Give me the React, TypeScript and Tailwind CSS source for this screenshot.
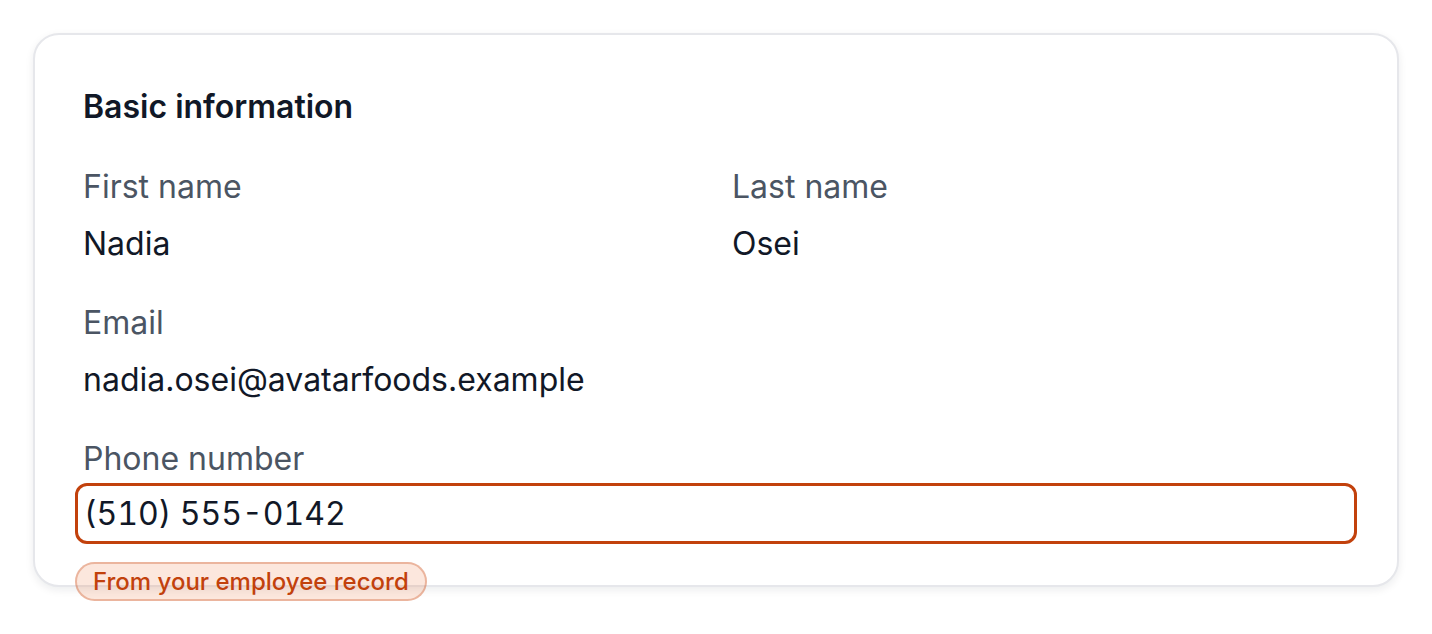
export default function App() {
  return (
    <div
      className="min-h-screen bg-white p-[33px]"
      style={{ fontFamily: 'Inter, "Liberation Sans", sans-serif' }}
    >
      <div className="relative h-[554px] rounded-[26px] border-2 border-[#e6e7eb] bg-white px-[40px] pt-[52px] shadow-[0_3px_8px_rgba(17,24,39,0.08)]">
        <h2 className="pl-[8px] text-[32px] font-semibold leading-[40px] text-[#111827]">
          Basic information
        </h2>

        <div className="mt-[40px] grid grid-cols-2 gap-x-[16px]">
          <div className="pl-[8px]">
            <div className="text-[32px] leading-[40px] text-[#4b5563]">First name</div>
            <div className="mt-[17px] text-[32px] leading-[40px] text-[#111827]">Nadia</div>
          </div>
          <div className="pl-[8px]">
            <div className="text-[32px] leading-[40px] text-[#4b5563]">Last name</div>
            <div className="mt-[17px] text-[32px] leading-[40px] text-[#111827]">Osei</div>
          </div>
        </div>

        <div className="mt-[39px] pl-[8px]">
          <div className="text-[32px] leading-[40px] text-[#4b5563]">Email</div>
          <div className="mt-[17px] text-[32px] leading-[40px] text-[#111827]">
            nadia.osei@avatarfoods.example
          </div>
        </div>

        <div className="mt-[39px]">
          <label className="block pl-[8px] text-[32px] leading-[40px] text-[#4b5563]">
            Phone number
          </label>
          <div className="mt-[4px] flex h-[61px] items-center rounded-[12px] border-[3px] border-[#c2410c] bg-white px-[6px]">
            <span className="text-[32px] leading-[40px] text-[#111827] tabular-nums">
              (510) 555-0142
            </span>
          </div>
          <div className="mt-[18px] inline-flex h-[39px] items-center rounded-full border-2 border-[rgba(194,65,12,0.3)] bg-[rgba(234,88,12,0.14)] px-[16px]">
            <span className="text-[24px] font-medium text-[#c2410c]">From your employee record</span>
          </div>
        </div>
      </div>
    </div>
  );
}
